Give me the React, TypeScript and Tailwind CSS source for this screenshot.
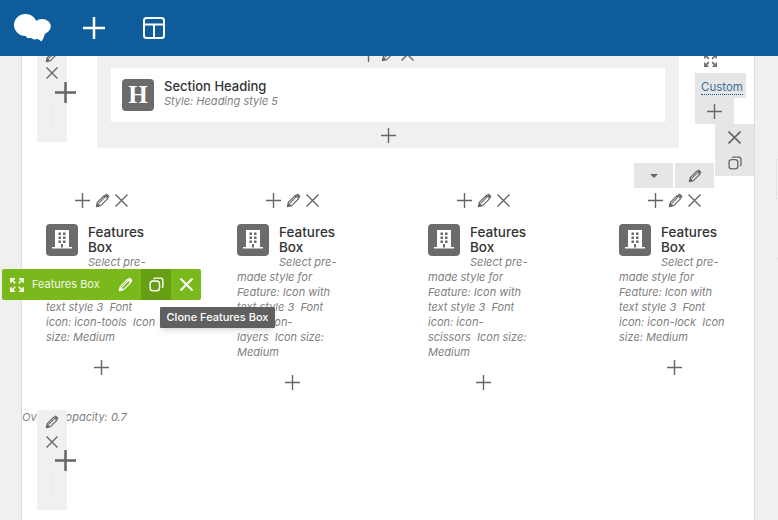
const font = { fontFamily: 'Inter, "Liberation Sans", sans-serif' }

function PlusIcon({ size = 15, stroke = 1.4, color = '#666' }: { size?: number; stroke?: number; color?: string }) {
  return (
    <svg width={size} height={size} viewBox={`0 0 ${size} ${size}`} fill="none" stroke={color} strokeWidth={stroke} className="shrink-0">
      <path d={`M${size / 2} 0V${size}M0 ${size / 2}H${size}`} />
    </svg>
  )
}

function CloseIcon({ size = 13, stroke = 1.4, color = '#666' }: { size?: number; stroke?: number; color?: string }) {
  return (
    <svg width={size} height={size} viewBox={`0 0 ${size} ${size}`} fill="none" stroke={color} strokeWidth={stroke} className="shrink-0">
      <path d={`M0.5 0.5L${size - 0.5} ${size - 0.5}M${size - 0.5} 0.5L0.5 ${size - 0.5}`} />
    </svg>
  )
}

function PencilIcon({ size = 16, color = '#666' }: { size?: number; color?: string }) {
  return (
    <svg width={size} height={size} viewBox="0 0 16 16" fill="none" className="shrink-0">
      <path d="M1.5 14.5l1-4.5 7.5-7.5 3.5 3.5-7.5 7.5z" stroke={color} strokeWidth="1.3" strokeLinejoin="round" />
      <path d="M1.5 14.5l1-4.5 3.5 3.5z" fill={color} />
      <path d="M10.5 2l1-1c.5-.4 1-.4 1.5 0l2 2c.4.5.4 1 0 1.5l-1 1z" fill={color} />
      <path d="M4 11l6.5-6.5" stroke={color} strokeWidth="1.2" />
    </svg>
  )
}

function CopyIcon({ size = 16, color = '#666' }: { size?: number; color?: string }) {
  return (
    <svg width={size} height={size} viewBox="0 0 16 16" fill="none" stroke={color} strokeWidth="1.5">
      <rect x="1.2" y="4.2" width="10" height="10.5" rx="3" />
      <path d="M5 2.2c.3-.6.8-1 1.6-1h5.6c1.5 0 2.6 1.1 2.6 2.6v5.8c0 .9-.5 1.5-1.2 1.8" />
    </svg>
  )
}

function ExpandIcon({ size = 16, color = '#666' }: { size?: number; color?: string }) {
  return (
    <svg width={size} height={size} viewBox="0 0 16 16" fill="none" stroke={color} strokeWidth="1.8">
      <path d="M1 5.5V1h4.5M10.5 1H15v4.5M15 10.5V15h-4.5M5.5 15H1v-4.5" />
      <path d="M2 2l4 4M14 2l-4 4M14 14l-4-4M2 14l4-4" />
    </svg>
  )
}

function Logo() {
  return (
    <svg width="37" height="28" viewBox="0 0 37 28" fill="white">
      <ellipse cx="11.5" cy="11" rx="11.5" ry="11" />
      <ellipse cx="28" cy="12.500" rx="8.800" ry="7.500" />
      <path d="M18 7h9v14H18z" />
      <path d="M11 20.500L32 17l-2.500 7-2 3.500-3.500-2.500-4 .5-3-1.500-4 0z" />
    </svg>
  )
}

function LayoutIcon() {
  return (
    <svg width="24" height="24" viewBox="0 0 24 24" fill="none" stroke="white" strokeWidth="2">
      <rect x="2" y="2" width="20" height="20" rx="2.5" />
      <path d="M2 8.500h20M12 8.500V22" />
    </svg>
  )
}

function BuildingTile() {
  return (
    <div className="float-left mr-[10px] h-[32px] w-[32px] rounded-[4px] bg-[#6b6b6b]">
      <svg width="32" height="32" viewBox="0 0 32 32" fill="white">
        <path d="M9 6h14v17H9z" />
        <path d="M6 23h20v1.500H6z" />
        <g fill="#6b6b6b">
          <rect x="12.500" y="8.500" width="2.500" height="2.500" />
          <rect x="17" y="8.500" width="2.500" height="2.500" />
          <rect x="12.500" y="12.500" width="2.500" height="2.500" />
          <rect x="17" y="12.500" width="2.500" height="2.500" />
          <rect x="12.500" y="16.500" width="2.500" height="2.500" />
          <rect x="17" y="16.500" width="2.500" height="2.500" />
          <rect x="15" y="20" width="2" height="3.500" />
        </g>
      </svg>
    </div>
  )
}

function Controls() {
  return (
    <div className="flex h-[16px] items-center justify-center gap-[5px]">
      <PlusIcon />
      <PencilIcon size={15} />
      <CloseIcon size={13} />
    </div>
  )
}

const columns = [
  ['Feature: Icon with', 'text style 3  Font', 'icon: icon-tools  Icon', 'size: Medium'],
  ['Feature: Icon with', 'text style 3  Font', 'icon: icon-', 'layers  Icon size:', 'Medium'],
  ['Feature: Icon with', 'text style 3  Font', 'icon: icon-', 'scissors  Icon size:', 'Medium'],
  ['Feature: Icon with', 'text style 3  Font', 'icon: icon-lock  Icon', 'size: Medium'],
]

function FeatureColumn({ lines }: { lines: string[] }) {
  return (
    <div className="w-[191px] shrink-0 pr-[33px]">
      <Controls />
      <div className="pl-[24px] pt-[16px]">
        <div className="h-[31px]">
          <BuildingTile />
          <div className="pt-[1px] text-[13.5px] leading-[15px] font-medium text-[#333]">
            Features
            <br />
            Box
          </div>
        </div>
        <div className="text-[11px] leading-[15px] italic text-[#808080] whitespace-pre">
          <div className="pl-[42px]">Select pre-</div>
          <div>made style for</div>
          {lines.map((line) => (
            <div key={line}>{line}</div>
          ))}
        </div>
      </div>
      <div className="flex justify-center pt-[15px]">
        <PlusIcon />
      </div>
    </div>
  )
}

export default function App() {
  return (
    <div className="relative h-[520px] w-[778px] overflow-hidden bg-[#f0f0f1]" style={font}>
      <header className="relative z-20 flex h-[56px] items-center bg-[#0e5c9b] pl-[14px]">
        <Logo />
        <div className="ml-[32px]">
          <PlusIcon size={22} stroke={2.500} color="white" />
        </div>
        <div className="ml-[37px]">
          <LayoutIcon />
        </div>
      </header>

      <main className="relative ml-[21px] h-[464px] w-[734px] border-x border-[#dcdcde] bg-white">
        <section className="ml-[75px] h-[92px] w-[582px] bg-[#f0f0f0] px-[14px] pt-[12px]">
          <div className="flex h-[54px] items-center bg-white pl-[11px]">
            <div className="flex h-[32px] w-[32px] items-center justify-center rounded-[4px] bg-[#6b6b6b] text-[25px] font-bold text-white" style={{ fontFamily: '"Liberation Serif", serif' }}>
              H
            </div>
            <div className="-mt-[4px] ml-[10px]">
              <div className="text-[13px] leading-[16px] font-medium text-[#333]">Section Heading</div>
              <div className="text-[11px] leading-[15px] italic text-[#808080]">Style: Heading style 5</div>
            </div>
          </div>
          <div className="flex justify-center pt-[6px]">
            <PlusIcon />
          </div>
        </section>

        <section className="mt-[44px] flex items-start">
          {columns.map((lines, i) => (
            <FeatureColumn key={i} lines={lines} />
          ))}
        </section>

        <p className="mt-[20px] text-[11px] leading-[15px] italic text-[#808080]">Overlay opacity: 0.7</p>
      </main>

      {/* faint edge of the neighbouring sidebar */}
      <div className="absolute left-[776px] top-[159px] h-[40px] w-[2px] border-y border-l border-[#e2e2e2] bg-[#f6f6f6]" />
      <div className="absolute left-[776px] top-[258px] h-[1px] w-[2px] bg-[#e2e2e2]" />

      {/* clipped controls right under the top bar */}
      <div className="absolute left-[358px] top-[46px] z-10 w-[58px]">
        <Controls />
      </div>

      {/* left column handles */}
      <div className="absolute left-[37px] top-[56px] flex h-[86px] w-[30px] flex-col items-center bg-[#f0f0f0]">
        <div className="-mt-[7px]">
          <PencilIcon size={14} />
        </div>
        <div className="mt-[4px]">
          <CloseIcon size={12} />
        </div>
        <div className="ml-[26px] mt-[3px]">
          <PlusIcon size={21} stroke={2.500} />
        </div>
        <div className="mt-[1px] h-[20px] w-[2px] bg-[#eaeaea]" />
      </div>
      <div className="absolute left-[37px] top-[410px] flex h-[100px] w-[30px] flex-col items-center bg-[#f0f0f0]">
        <div className="mt-[5px]">
          <PencilIcon size={14} />
        </div>
        <div className="mt-[7px]">
          <CloseIcon size={12} />
        </div>
        <div className="ml-[26px] mt-[2px]">
          <PlusIcon size={21} stroke={2.500} />
        </div>
        <div className="mt-[1px] h-[20px] w-[2px] bg-[#eaeaea]" />
      </div>

      {/* right side handles */}
      <div className="absolute left-[704px] top-[54px] z-10">
        <ExpandIcon size={13} />
      </div>
      <div className="absolute left-[695px] top-[73px] flex h-[25px] w-[51px] items-center justify-center bg-[#e6e6e6] pl-[3px] pt-[4px]">
        <span className="border-b border-dotted border-[#0e5c9b] text-[11.5px] leading-[14px] text-[#3b6d9a]">Custom</span>
      </div>
      <div className="absolute left-[695px] top-[98px] flex h-[26px] w-[39px] items-center justify-center bg-[#e6e6e6]">
        <PlusIcon />
      </div>
      <div className="absolute left-[715px] top-[124px] flex h-[52px] w-[39px] flex-col items-center justify-center gap-[12px] bg-[#e6e6e6]">
        <CloseIcon size={13} stroke={1.600} />
        <CopyIcon size={14} />
      </div>
      <div className="absolute left-[634px] top-[163px] flex gap-[2px]">
        <div className="flex h-[25px] w-[39px] items-center justify-center bg-[#e6e6e6]">
          <div className="h-0 w-0 border-x-[4px] border-t-[4px] border-x-transparent border-t-[#666]" />
        </div>
        <div className="flex h-[25px] w-[39px] items-center justify-center bg-[#e6e6e6]">
          <PencilIcon size={14} />
        </div>
      </div>

      {/* selected element toolbar */}
      <div className="absolute left-[2px] top-[269px] z-10 flex h-[31px] w-[199px] items-center rounded-[2px] bg-[#7ab91c] text-white">
        <div className="ml-[8px]">
          <ExpandIcon size={14} color="white" />
        </div>
        <span className="ml-[8px] text-[11px] whitespace-nowrap opacity-90">Features Box</span>
        <div className="ml-auto">
          <PencilIcon size={15} color="white" />
        </div>
        <div className="ml-[8px] flex h-[31px] w-[30px] items-center justify-center bg-[#669f14]">
          <CopyIcon size={15} color="white" />
        </div>
        <div className="flex h-[31px] w-[30px] items-center justify-center">
          <CloseIcon size={13} stroke={2} color="white" />
        </div>
      </div>
      <div className="absolute left-[160px] top-[307px] z-10 flex h-[21px] w-[115px] items-center justify-center rounded-[1px] bg-[#606060] text-[11px] font-medium whitespace-nowrap text-white shadow-md">
        Clone Features Box
      </div>
    </div>
  )
}
